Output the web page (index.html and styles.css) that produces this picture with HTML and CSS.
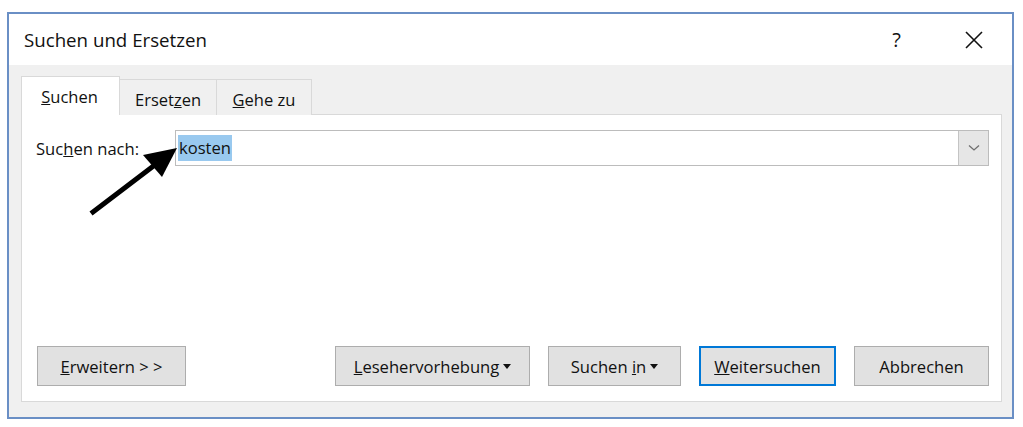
FILE: index.html
```html
<!DOCTYPE html>
<html lang="de">
<head>
    <meta charset="UTF-8">
    <title>Suchen und Ersetzen</title>
    <link rel="stylesheet" href="styles.css">
</head>
<body>

    <div class="dialog">
        <div class="titlebar">
            <span class="title">Suchen und Ersetzen</span>
            <span class="help">?</span>
            <svg class="close" width="18" height="18" viewBox="0 0 18 18">
                <path d="M1 1 L17 17 M17 1 L1 17" stroke="#111" stroke-width="1.6" fill="none"/>
            </svg>
        </div>

        <div class="dialog-body">
            <div class="tabs">
                <div class="tab active"><span><u>S</u>uchen</span></div>
                <div class="tab"><span>Erset<u>z</u>en</span></div>
                <div class="tab"><span><u>G</u>ehe zu</span></div>
            </div>

            <div class="panel">
                <div class="search-row">
                    <label class="label">Suc<u>h</u>en nach:</label>
                    <div class="combo">
                        <span class="combo-text"><span class="selected">kosten</span></span>
                        <span class="combo-button">
                            <svg width="12" height="8" viewBox="0 0 12 8">
                                <path d="M1 1.5 L6 6 L11 1.5" stroke="#707070" stroke-width="1.3" fill="none"/>
                            </svg>
                        </span>
                    </div>
                </div>

                <div class="button-row">
                    <button class="btn btn-more"><span><u>E</u>rweitern &gt; &gt;</span></button>
                    <div class="button-group">
                        <button class="btn btn-read"><span><u>L</u>esehervorhebung</span><span class="caret"></span></button>
                        <button class="btn btn-in"><span>Suchen <u>i</u>n</span><span class="caret"></span></button>
                        <button class="btn btn-next focused"><span><u>W</u>eitersuchen</span></button>
                        <button class="btn btn-cancel"><span>Abbrechen</span></button>
                    </div>
                </div>
            </div>
        </div>
    </div>

    <!-- annotation arrow pointing at the search field -->
    <svg class="pointer" width="1023" height="427" viewBox="0 0 1023 427">
        <line x1="93" y1="212" x2="160" y2="161" stroke="#000" stroke-width="5" stroke-linecap="square"/>
        <polygon points="177,148 143,155 162,177" fill="#000"/>
    </svg>

</body>
</html>
```

FILE: styles.css
```css
body {
    margin: 0;
    background: #fff;
    font-family: 'Open Sans', 'Noto Sans', sans-serif;
    color: #111;
    position: relative;
}

.dialog {
    box-sizing: border-box;
    margin: 12px 0 0 7px;
    width: 1007px;
    height: 407px;
    border: 2px solid #6a8fc5;
    display: flex;
    flex-direction: column;
    background: #f0f0f0;
}

.titlebar {
    height: 51px;
    background: #fff;
    display: flex;
    align-items: center;
    padding-left: 15px;
}

    .titlebar .title {
        font-size: 18.7px;
        flex: 1;
    }

    .titlebar .help {
        font-size: 20px;
        margin-right: 64px;
    }

    .titlebar .close {
        margin-right: 29px;
    }

.dialog-body {
    flex: 1;
    display: flex;
    flex-direction: column;
    padding: 12px 10px 15px 12px;
}

.tabs {
    display: flex;
    align-items: flex-end;
    height: 38px;
    margin-bottom: -1px;
    position: relative;
    z-index: 1;
}

.tab {
    box-sizing: border-box;
    height: 36px;
    border: 1px solid #d9d9d9;
    border-bottom: none;
    background: #f0f0f0;
    font-size: 16.5px;
    display: flex;
    align-items: center;
    justify-content: center;
    padding-top: 3px;
    width: 97px;
}

    .tab + .tab {
        border-left: none;
    }

    .tab:nth-child(3) {
        width: 95px;
    }

    .tab.active {
        width: 99px;
        height: 39px;
        background: #fff;
        padding: 0 2px 0 0;
    }

.panel {
    flex: 1;
    background: #fff;
    border: 1px solid #d9d9d9;
    display: flex;
    flex-direction: column;
    justify-content: space-between;
    padding: 15px 12px 15px 14px;
}

.search-row {
    display: flex;
    align-items: center;
}

.label {
    width: 139px;
    font-size: 16.6px;
}

.combo {
    flex: 1;
    box-sizing: border-box;
    height: 36px;
    border: 1px solid #bcbcbc;
    display: flex;
    align-items: stretch;
}

.combo-text {
    flex: 1;
    display: flex;
    align-items: center;
    padding-left: 2px;
    font-size: 16.6px;
}

.selected {
    background: #99c9ef;
    padding: 1px 1px 2px 1px;
}

.combo-button {
    box-sizing: border-box;
    width: 30px;
    background: #e6e6e6;
    border-left: 1px solid #c4c4c4;
    display: flex;
    align-items: center;
    justify-content: center;
}

.button-row {
    display: flex;
    justify-content: space-between;
    padding-left: 1px;
}

.button-group {
    display: flex;
    gap: 18px;
}

.btn {
    box-sizing: border-box;
    height: 40px;
    background: #e1e1e1;
    border: 1px solid #adadad;
    font-family: 'Open Sans', 'Noto Sans', sans-serif;
    font-size: 16.6px;
    color: #111;
    padding: 0;
    display: flex;
    align-items: center;
    justify-content: center;
}

.btn-more { width: 149px; }
.btn-read { width: 195px; }
.btn-in { width: 133px; }
.btn-next { width: 137px; }
.btn-cancel { width: 135px; }

.btn.focused {
    border: 2px solid #0078d7;
}

.caret {
    display: inline-block;
    width: 0;
    height: 0;
    margin-left: 4px;
    border-left: 4.5px solid transparent;
    border-right: 4.5px solid transparent;
    border-top: 5px solid #111;
}

.pointer {
    position: absolute;
    left: 0;
    top: 0;
    pointer-events: none;
}
```
